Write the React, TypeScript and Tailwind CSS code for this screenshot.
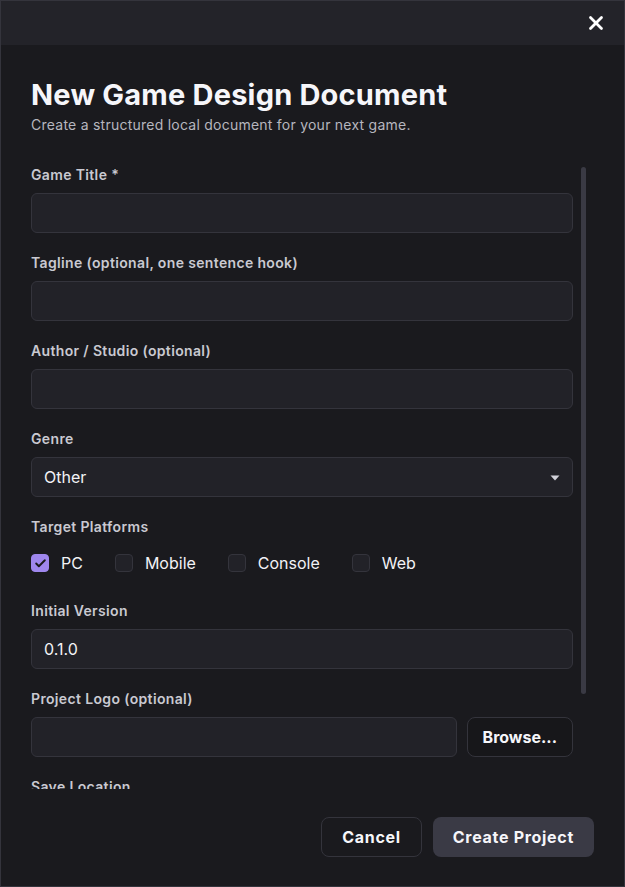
import React, { useState } from 'react';
import { X, Check } from 'lucide-react';

const Label = ({ children }: { children: React.ReactNode }) => (
    <label className="block text-sm leading-5 tracking-[0.35px] font-semibold text-[#c9c9d1] mb-2">{children}</label>
);

const TextInput = ({ value = '' }: { value?: string }) => (
    <input
        defaultValue={value}
        className="w-full h-10 rounded-md border border-[#34343c] bg-[#222228] px-3 text-base text-[#f2f2f6] outline-none"
    />
);

const Checkbox = ({ label, checked, onToggle }: { label: string; checked: boolean; onToggle: () => void }) => (
    <button type="button" onClick={onToggle} className="flex items-center gap-3 cursor-pointer">
        <span
            className={`w-[18px] h-[18px] rounded-[4px] flex items-center justify-center border ${checked
                ? 'bg-[#9f87ee] border-[#9f87ee]'
                : 'bg-[#222228] border-[#34343c]'
                }`}
        >
            {checked && <Check size={13} strokeWidth={3.5} className="text-[#1a1a1e]" />}
        </span>
        <span className="text-base text-[#f2f2f6]">{label}</span>
    </button>
);

const BrowseButton = () => (
    <button type="button" className="h-10 shrink-0 px-[15px] rounded-lg border border-[#34343c] bg-[#17171a] text-base font-bold text-[#f6f6fa]">
        Browse...
    </button>
);

export default function App() {
    const [platforms, setPlatforms] = useState<Record<string, boolean>>({ PC: true, Mobile: false, Console: false, Web: false });

    const toggle = (p: string) => setPlatforms(prev => ({ ...prev, [p]: !prev[p] }));

    return (
        <div className="w-[625px] h-[887px] flex flex-col bg-[#1a1a1e] border border-[#34343c] font-['Inter','Noto_Sans',sans-serif] text-[#f2f2f6]">
            {/* Title bar */}
            <div className="h-[44px] shrink-0 bg-[#232329] flex items-center justify-end pr-[17px]">
                <button type="button" className="text-white">
                    <X size={22} strokeWidth={3} />
                </button>
            </div>

            {/* Header */}
            <div className="px-[30px] pt-[33px] shrink-0">
                <h1 className="text-[29px] leading-[34px] tracking-[0.2px] font-bold text-[#f6f6fa]">New Game Design Document</h1>
                <p className="mt-[3px] text-sm leading-5 tracking-[0.24px] text-[#b6b6be]">Create a structured local document for your next game.</p>
            </div>

            {/* Scrollable form, native bar hidden, thumb drawn on top */}
            <div className="relative mt-[30px] ml-[30px] mr-[37px] flex-1 min-h-0">
                <div className="h-full pr-[14px] overflow-y-auto [scrollbar-width:none] [&::-webkit-scrollbar]:hidden">
                    <div className="flex flex-col gap-5 pb-4">
                        <div>
                            <Label>Game Title *</Label>
                            <TextInput />
                        </div>
                        <div>
                            <Label>Tagline (optional, one sentence hook)</Label>
                            <TextInput />
                        </div>
                        <div>
                            <Label>Author / Studio (optional)</Label>
                            <TextInput />
                        </div>
                        <div>
                            <Label>Genre</Label>
                            <div className="relative">
                                <select
                                    defaultValue="Other"
                                    className="w-full h-10 appearance-none rounded-md border border-[#34343c] bg-[#222228] pl-3 pr-8 text-base text-[#f2f2f6] outline-none"
                                >
                                    <option>Action</option>
                                    <option>Adventure</option>
                                    <option>Puzzle</option>
                                    <option>RPG</option>
                                    <option>Strategy</option>
                                    <option>Other</option>
                                </select>
                                <svg className="absolute right-[13px] top-[18px] pointer-events-none" width="10" height="6" viewBox="0 0 10 6">
                                    <path d="M0.5 0.5h9L5 5.5z" fill="#d2d2da" />
                                </svg>
                            </div>
                        </div>
                        <div>
                            <Label>Target Platforms</Label>
                            <div className="flex items-center gap-8 pt-[6px] pb-[6px]">
                                {Object.keys(platforms).map(p => (
                                    <Checkbox key={p} label={p} checked={platforms[p]} onToggle={() => toggle(p)} />
                                ))}
                            </div>
                        </div>
                        <div>
                            <Label>Initial Version</Label>
                            <TextInput value="0.1.0" />
                        </div>
                        <div>
                            <Label>Project Logo (optional)</Label>
                            <div className="flex gap-[10px]">
                                <TextInput />
                                <BrowseButton />
                            </div>
                        </div>
                        <div>
                            <Label>Save Location</Label>
                            <div className="flex gap-[10px]">
                                <TextInput />
                                <BrowseButton />
                            </div>
                            <p className="mt-2 text-xs text-[#8a8a94]">A new folder will be created for the project.</p>
                        </div>
                    </div>
                </div>
                <div className="absolute right-[1px] top-[2px] w-[5px] h-[527px] rounded-full bg-[#3a3a44] pointer-events-none" />
            </div>

            {/* Footer */}
            <div className="shrink-0 flex justify-end gap-[11px] px-[30px] pt-[28px] pb-[29px]">
                <button type="button" className="h-10 px-5 rounded-lg border border-[#34343c] text-base font-bold tracking-[0.7px] text-[#f6f6fa]">
                    Cancel
                </button>
                <button type="button" className="h-10 px-5 rounded-lg bg-[#3a3a45] text-base font-bold tracking-[0.7px] text-[#f6f6fa]">
                    Create Project
                </button>
            </div>
        </div>
    );
}
